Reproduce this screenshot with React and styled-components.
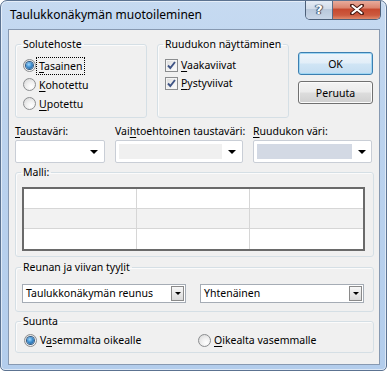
import React from 'react';
import styled, { createGlobalStyle } from 'styled-components';

const Global = createGlobalStyle`
  html, body { margin: 0; padding: 0; background: #ffffff; }
  body {
    font-family: "Noto Sans", "Segoe UI", "DejaVu Sans", sans-serif;
    font-size: 10.5px;
    color: #000;
  }
  * { box-sizing: border-box; }
`;

const Window = styled.div`
  width: 387px;
  height: 371px;
  border: 1px solid #5c7391;
  border-radius: 7px 7px 5px 5px;
  background: linear-gradient(180deg, #c6daf1 0%, #bcd3ee 30%, #b3cdec 100%);
  box-shadow: inset 0 0 0 1px rgba(255, 255, 255, 0.55);
  display: flex;
  flex-direction: column;
  overflow: hidden;
`;

const TitleBar = styled.div`
  height: 28px;
  display: flex;
  align-items: flex-start;
  flex: none;
`;

const Title = styled.div`
  padding-left: 9px;
  line-height: 28px;
  font-size: 12px;
  color: #000;
  flex: 1;
`;

const CaptionGroup = styled.div`
  display: flex;
  margin-top: -1px;
  margin-right: 5px;
  height: 20px;
  border: 1px solid #4d6079;
  border-top: none;
  border-radius: 0 0 5px 5px;
  overflow: hidden;
`;

const HelpButton = styled.div`
  width: 27px;
  height: 19px;
  border-right: 1px solid #5b6c86;
  background: linear-gradient(180deg, #e6edf6 0%, #d2dce9 45%, #b9c8db 50%, #c8d6e8 100%);
  display: flex;
  align-items: center;
  justify-content: center;
  font-weight: bold;
  font-size: 13px;
  color: #fff;
  font-family: "DejaVu Sans", sans-serif;
  text-shadow: 0 0 1px #3b4a60, 0 0 1px #3b4a60, 1px 0 1px #3b4a60, -1px 0 1px #3b4a60;
`;

const CloseButton = styled.div`
  width: 47px;
  height: 19px;
  background: linear-gradient(180deg, #eab1a2 0%, #dc8670 40%, #c74a30 50%, #cc5a3f 80%, #e08a6c 100%);
  display: flex;
  align-items: center;
  justify-content: center;
`;

const Client = styled.div`
  flex: 1;
  margin: 0 6px 5px 7px;
  border: 1px solid #8799b1;
  background: #f0f0f0;
  padding: 7px 5px 0 6px;
  display: flex;
  flex-direction: column;
`;

const TopRow = styled.div`
  display: flex;
  align-items: stretch;
`;

const Group = styled.fieldset`
  margin: ${p => p.$mt || 0}px 0 0 0;
  padding: 0;
  border: 1px solid #d5dfe5;
  border-radius: 3px;
  min-width: 0;
  width: ${p => (p.$w ? `${p.$w}px` : 'auto')};
  margin-right: ${p => p.$mr || 0}px;
  box-shadow: inset 1px 1px 0 #fbfbfb;
`;

const Legend = styled.legend`
  margin-left: 5px;
  padding: 0 2px;
  line-height: 15px;
  white-space: nowrap;
`;

const OptionList = styled.div`
  display: flex;
  flex-direction: column;
  padding: ${p => p.$pad};
`;

const OptionRow = styled.label`
  display: flex;
  align-items: center;
  height: ${p => p.$h || 19}px;
  gap: ${p => p.$gap || 2}px;
  white-space: nowrap;
`;

const RadioCircle = styled.span`
  width: 13px;
  height: 13px;
  border-radius: 50%;
  border: 1px solid #8b8d8f;
  background: radial-gradient(circle at 65% 70%, #ffffff 0%, #f1f1f1 40%, #d4d4d4 100%);
  display: flex;
  align-items: center;
  justify-content: center;
  flex: none;
`;

const RadioDot = styled.span`
  width: 7px;
  height: 7px;
  border-radius: 50%;
  background: radial-gradient(circle at 40% 35%, #9fd8ff 0%, #3e8fd0 45%, #1a4f86 100%);
  box-shadow: 0 0 0 1px #315a84;
`;

const CheckBox = styled.span`
  width: 13px;
  height: 13px;
  border: 1px solid #8b8d8f;
  background: linear-gradient(135deg, #d9d9d9 0%, #eeeeee 50%, #ffffff 100%);
  box-shadow: inset 0 0 0 1px #f4f4f4;
  display: flex;
  align-items: center;
  justify-content: center;
  flex: none;
`;

const FocusText = styled.span`
  outline: 1px dotted #000;
  outline-offset: 1px;
  padding: 0 1px;
  line-height: 14px;
`;

const PlainText = styled.span`
  padding-left: 1px;
`;

const Key = styled.u`
  text-decoration: underline;
  text-underline-offset: 2px;
`;

const ButtonCol = styled.div`
  display: flex;
  flex-direction: column;
  gap: 6px;
  margin-top: 15px;
  margin-left: 9px;
`;

const PushButton = styled.div`
  width: 75px;
  height: 23px;
  border-radius: 3px;
  border: 1px solid ${p => (p.$default ? '#3c7fb1' : '#707070')};
  background: ${p =>
    p.$default
      ? 'linear-gradient(180deg, #eef5fb 0%, #e2eef8 48%, #d0e5f5 52%, #c4ddf1 100%)'
      : 'linear-gradient(180deg, #f3f3f3 0%, #ebebeb 48%, #dddddd 52%, #cfcfcf 100%)'};
  box-shadow: inset 0 0 0 1px ${p => (p.$default ? '#9fd6f3' : '#fbfbfb')};
  display: flex;
  align-items: center;
  justify-content: center;
`;

const ColorRow = styled.div`
  display: flex;
  gap: 10px;
  margin-top: 6px;
`;

const ColorField = styled.div`
  width: ${p => p.$w}px;
  display: flex;
  flex-direction: column;
  gap: 1px;
`;

const FieldLabel = styled.div`
  line-height: 15px;
  white-space: nowrap;
`;

const ColorCombo = styled.div`
  height: 23px;
  border: 1px solid #c9ced6;
  border-radius: 2px;
  background: #fff;
  display: flex;
  align-items: stretch;
  padding: 3px 0 3px 3px;
`;

const Swatch = styled.div`
  flex: 1;
  background: ${p => p.$color};
`;

const ArrowBox = styled.div`
  width: ${p => p.$w || 18}px;
  display: flex;
  align-items: center;
  justify-content: center;
  flex: none;
`;

const Triangle = styled.span`
  width: 0;
  height: 0;
  border-left: ${p => p.$s || 4}px solid transparent;
  border-right: ${p => p.$s || 4}px solid transparent;
  border-top: ${p => (p.$s || 4)}px solid #000;
`;

const TableWrap = styled.div`
  padding: 7px 8px 5px 6px;
`;

const Preview = styled.div`
  border: 2px solid #6a6a6a;
  display: flex;
  flex-direction: column;
`;

const PreviewRow = styled.div`
  display: grid;
  grid-template-columns: 1fr 1fr 1fr;
  height: 20px;
  background: ${p => (p.$alt ? '#f2f2f2' : '#ffffff')};
  border-bottom: ${p => (p.$last ? 'none' : '1px solid #d6d6d6')};
`;

const PreviewCell = styled.div`
  border-right: ${p => (p.$last ? 'none' : '1px solid #d6d6d6')};
`;

const StyleRow = styled.div`
  display: flex;
  gap: 14px;
  padding: 9px 9px 8px 6px;
`;

const DropList = styled.div`
  flex: 1;
  height: 19px;
  border: 1px solid #a5acb5;
  background: #fff;
  display: flex;
  align-items: center;
  padding: 0 1px 0 3px;
`;

const DropText = styled.span`
  flex: 1;
  line-height: 15px;
  white-space: nowrap;
`;

const DropButton = styled.div`
  width: 13px;
  height: 15px;
  border: 1px solid #8a8a8a;
  background: linear-gradient(180deg, #f7f7f7 0%, #e8e8e8 50%, #dadada 100%);
  display: flex;
  align-items: center;
  justify-content: center;
`;

const DirectionRow = styled.div`
  display: grid;
  grid-template-columns: 174px 1fr;
  padding: 2px 0 3px 8px;
`;

const Radio = ({ checked, children, focus, h }) => (
  <OptionRow $h={h}>
    <RadioCircle>{checked && <RadioDot />}</RadioCircle>
    {focus ? <FocusText>{children}</FocusText> : <PlainText>{children}</PlainText>}
  </OptionRow>
);

const Check = ({ children }) => (
  <OptionRow $h={18} $gap={3}>
    <CheckBox>
      <svg width="11" height="11" viewBox="0 0 11 11">
        <path d="M2 5.5 L4.3 8 L9 2" fill="none" stroke="#3f5485" strokeWidth="1.9" />
      </svg>
    </CheckBox>
    <span>{children}</span>
  </OptionRow>
);

export default function App() {
  return (
    <>
      <Global />
      <Window>
        <TitleBar>
          <Title>Taulukkonäkymän muotoileminen</Title>
          <CaptionGroup>
            <HelpButton>?</HelpButton>
            <CloseButton>
              <svg width="14" height="11" viewBox="0 0 14 11">
                <path d="M2 1.5 L12 9.5 M12 1.5 L2 9.5" stroke="#4a1a12" strokeWidth="4" strokeLinecap="round" />
                <path d="M2.5 2 L11.5 9 M11.5 2 L2.5 9" stroke="#ffffff" strokeWidth="2.2" strokeLinecap="round" />
              </svg>
            </CloseButton>
          </CaptionGroup>
        </TitleBar>
        <Client>
          <TopRow>
            <Group $w={132} $mr={10}>
              <Legend>Solutehoste</Legend>
              <OptionList $pad="4px 0 4px 7px">
                <Radio checked focus><Key>T</Key>asainen</Radio>
                <Radio><Key>K</Key>ohotettu</Radio>
                <Radio><Key>U</Key>potettu</Radio>
              </OptionList>
            </Group>
            <Group $w={132}>
              <Legend>Ruudukon näyttäminen</Legend>
              <OptionList $pad="4px 0 0 7px">
                <Check><Key>V</Key>aakaviivat</Check>
                <Check><Key>P</Key>ystyviivat</Check>
              </OptionList>
            </Group>
            <ButtonCol>
              <PushButton $default>OK</PushButton>
              <PushButton>Peruuta</PushButton>
            </ButtonCol>
          </TopRow>

          <ColorRow>
            <ColorField $w={90}>
              <FieldLabel><Key>T</Key>austaväri:</FieldLabel>
              <ColorCombo>
                <Swatch $color="#ffffff" />
                <ArrowBox $w={20}><Triangle /></ArrowBox>
              </ColorCombo>
            </ColorField>
            <ColorField $w={128}>
              <FieldLabel>Vai<Key>h</Key>toehtoinen taustaväri:</FieldLabel>
              <ColorCombo>
                <Swatch $color="#f0f0f0" />
                <ArrowBox $w={20}><Triangle /></ArrowBox>
              </ColorCombo>
            </ColorField>
            <ColorField $w={119}>
              <FieldLabel><Key>R</Key>uudukon väri:</FieldLabel>
              <ColorCombo>
                <Swatch $color="#d3d9e4" />
                <ArrowBox $w={19}><Triangle /></ArrowBox>
              </ColorCombo>
            </ColorField>
          </ColorRow>

          <Group $mt={2}>
            <Legend>Malli:</Legend>
            <TableWrap>
              <Preview>
                {[0, 1, 2].map(r => (
                  <PreviewRow key={r} $alt={r === 1} $last={r === 2}>
                    <PreviewCell />
                    <PreviewCell />
                    <PreviewCell $last />
                  </PreviewRow>
                ))}
              </Preview>
            </TableWrap>
          </Group>

          <Group $mt={3}>
            <Legend>Reunan ja viivan tyy<Key>l</Key>it</Legend>
            <StyleRow>
              <DropList>
                <DropText>Taulukkonäkymän reunus</DropText>
                <DropButton><Triangle $s={3} /></DropButton>
              </DropList>
              <DropList>
                <DropText>Yhtenäinen</DropText>
                <DropButton><Triangle $s={3} /></DropButton>
              </DropList>
            </StyleRow>
          </Group>

          <Group $mt={2}>
            <Legend>Suunta</Legend>
            <DirectionRow>
              <Radio checked h={18}>V<Key>a</Key>semmalta oikealle</Radio>
              <Radio h={18}><Key>O</Key>ikealta vasemmalle</Radio>
            </DirectionRow>
          </Group>
        </Client>
      </Window>
    </>
  );
}
